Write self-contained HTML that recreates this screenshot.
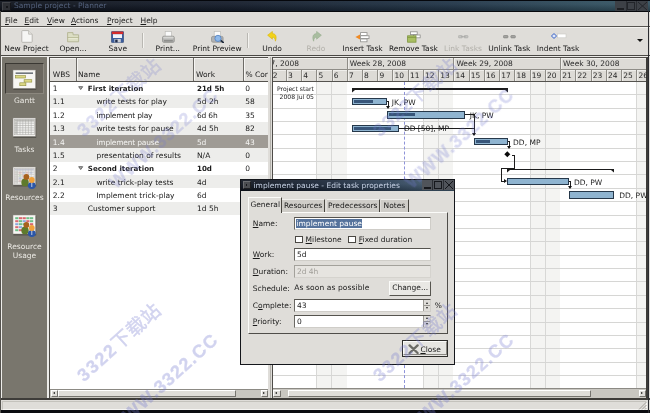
<!DOCTYPE html><html><head><meta charset='utf-8'><title>Sample project - Planner</title><style>
*{box-sizing:border-box;margin:0;padding:0}
html,body{width:650px;height:413px;overflow:hidden;background:#dfddd9}
body{position:relative;font-family:"DejaVu Sans","Liberation Sans",sans-serif;font-size:7.5px;color:#1a1a1a;line-height:10px}
.a{position:absolute;white-space:nowrap}
u{text-decoration:underline;text-underline-offset:1px;text-decoration-thickness:0.6px}
.t{position:absolute;white-space:nowrap;height:10px;line-height:10px}
.tb{position:absolute;white-space:nowrap;top:43.9px;height:10px;line-height:10px;text-align:center;transform:translateX(-50%)}
.dis{color:#b2b0aa}
.side{position:absolute;color:#ebe9e4;text-align:center;left:2px;width:45px;height:10px;line-height:10px}
.row{position:absolute;left:50px;width:218px;height:13.37px}
.hl{position:absolute;left:273px;width:373px;height:1px;background:#d6d6d4}
.wk{position:absolute;top:81px;height:307px;background:#f4f4f2;border-left:1px solid #d8d8d6}
.wk i{position:absolute;left:14.24px;top:0;width:1px;height:100%;background:#d8d8d6}
.bar{position:absolute;height:7.4px;background:#8fb4d0;border:1px solid #26384a}
.bar i{position:absolute;left:1px;top:1.3px;height:3px;background:#38567a}
.ln{position:absolute;background:#1c1c1c}
.gl{position:absolute;white-space:nowrap;height:10px;line-height:10px;font-size:7.5px;color:#222}
.wm b{font-weight:normal;font-size:19px;letter-spacing:0.6px;-webkit-text-stroke:0.5px #7479cf}
.hd{position:absolute;background:#dddbd6}
.fld{position:absolute;background:#fff;border:1px solid #cfcdc8;border-top-color:#55534e;border-left-color:#6a6863}
.wm{position:absolute;white-space:nowrap;color:#7479cf;-webkit-text-stroke:0.35px #7479cf;opacity:0.32;font-family:"Liberation Sans","Noto Sans CJK SC",sans-serif;font-weight:bold;font-size:18px;height:22px;line-height:22px;transform-origin:0 50%;transform:rotate(-42deg);letter-spacing:1.7px}
</style></head><body><div id='w' style='position:absolute;left:0;top:0;width:650px;height:413px;will-change:transform'>
<div class='a' style='left:0;top:0;width:650px;height:12px;background:linear-gradient(180deg,rgba(255,255,255,0.07) 0,rgba(255,255,255,0.05) 35%,rgba(0,0,0,0.28) 100%),linear-gradient(90deg,#0d111a 0%,#131b29 35%,#203447 70%,#31505f 94%,#31505f 100%)'></div><div class='a' style='left:0;top:11px;width:650px;height:1px;background:#07090d'></div>
<div class='a' style='left:0;top:0;width:650px;height:1px;background:#05070c'></div>
<div class='a' style='left:2px;top:2px;width:9px;height:9px;background:#2e3035;border:1px solid #43454a;border-right-color:#15161a;border-bottom-color:#15161a'></div>
<div class='a' style='left:5.5px;top:6px;width:2px;height:2px;background:#15161a'></div>
<div class='t' style='left:14px;top:1px;color:#53617c;font-size:7.5px'>Sample project - Planner</div>
<div class='a' style='left:615px;top:1px;width:33px;height:10px;background:#3d4147'></div>
<div class='a' style='left:617px;top:8px;width:7px;height:1.5px;background:#1d1f23'></div>
<div class='a' style='left:627px;top:2px;width:8px;height:8px;border:1px solid #22252a;border-top-width:1.5px'></div>
<svg class='a' style='left:637px;top:1px' width='11' height='10'><path d='M1 1L10 9M10 1L1 9' stroke='#22252a' stroke-width='1' fill='none'/></svg>
<div class='a' style='left:625.5px;top:1px;width:1px;height:10px;background:#2a2d32'></div>
<div class='a' style='left:636px;top:1px;width:1px;height:10px;background:#2a2d32'></div>
<div class='a' style='left:0;top:12px;width:650px;height:15px;background:#dfddd9'></div>
<div class='t' style='left:5px;top:15.8px'><u>F</u>ile</div>
<div class='t' style='left:24.5px;top:15.8px'><u>E</u>dit</div>
<div class='t' style='left:47px;top:15.8px'><u>V</u>iew</div>
<div class='t' style='left:71px;top:15.8px'><u>A</u>ctions</div>
<div class='t' style='left:107px;top:15.8px'><u>P</u>roject</div>
<div class='t' style='left:140.5px;top:15.8px'><u>H</u>elp</div>
<div class='a' style='left:0;top:26px;width:650px;height:1px;background:#565450'></div>
<div class='a' style='left:0;top:27px;width:650px;height:1px;background:#f3f2ef'></div>
<div class='a' style='left:0;top:55px;width:650px;height:1px;background:#4a4844'></div>
<div class='a' style='left:0;top:56px;width:650px;height:1px;background:#ecebe8'></div>
<div class='tb' style='left:26.5px'>New Project</div>
<div class='tb' style='left:73px'>Open...</div>
<div class='tb' style='left:117.8px'>Save</div>
<div class='tb' style='left:167.8px'>Print...</div>
<div class='tb' style='left:217.2px'>Print Preview</div>
<div class='tb' style='left:272px'>Undo</div>
<div class='tb dis' style='left:316px'>Redo</div>
<div class='tb' style='left:362.6px'>Insert Task</div>
<div class='tb' style='left:413.4px'>Remove Task</div>
<div class='tb dis' style='left:463px'>Link Tasks</div>
<div class='tb' style='left:509.4px'>Unlink Task</div>
<div class='tb' style='left:558px'>Indent Task</div>
<div class='a' style='left:142px;top:33px;width:1px;height:15px;background:#b9b7b2'></div><div class='a' style='left:143px;top:33px;width:1px;height:15px;background:#f4f3f0'></div>
<div class='a' style='left:246.5px;top:33px;width:1px;height:15px;background:#b9b7b2'></div><div class='a' style='left:247.5px;top:33px;width:1px;height:15px;background:#f4f3f0'></div>
<div class='a' style='left:636.8px;top:38.8px;width:0;height:0;border-left:3px solid transparent;border-right:3px solid transparent;border-top:3.6px solid #111'></div>
<svg class='a' style='left:20.5px;top:30px' width='12' height='13' viewBox='0 0 12 13'><path d='M0.8 1.2Q0.8 0.6 1.4 0.6H7.6L11.2 4.2V11.6Q11.2 12.3 10.6 12.3H1.4Q0.8 12.3 0.8 11.6Z' fill='#f6f6f4' stroke='#b3b1ab' stroke-width='0.9'/><path d='M7.6 0.6V4.2H11.2' fill='#e4e3df' stroke='#b3b1ab' stroke-width='0.7'/></svg>
<svg class='a' style='left:67px;top:32px' width='13' height='11' viewBox='0 0 13 11'><path d='M0.6 0.6H6V2.8H11.6V9.8H0.6Z' fill='#dcdec4' stroke='#b2b492' stroke-width='0.9'/><path d='M0.6 5.6H11.6' stroke='#adb088' stroke-width='0.8'/><path d='M1.4 6.4H10.8' stroke='#eef0dc' stroke-width='0.8'/></svg>
<svg class='a' style='left:111.4px;top:30.8px' width='13' height='12' viewBox='0 0 13 12'><rect x='0.4' y='0.4' width='12.2' height='11.2' rx='0.8' fill='#3b5d9d' stroke='#2a426f' stroke-width='0.6'/><rect x='0.8' y='0.6' width='11.4' height='2.6' fill='#d52b2b'/><rect x='2' y='3.2' width='9' height='3.8' fill='#f2f2f8'/><rect x='3.4' y='8' width='6.4' height='3.4' fill='#c9cdd6'/><rect x='4.2' y='8.6' width='2.4' height='2.8' fill='#1f2c4a'/></svg>
<svg class='a' style='left:161.8px;top:30.6px' width='13' height='12' viewBox='0 0 13 12'><rect x='3.2' y='0.5' width='6.4' height='5.6' fill='#fafafa' stroke='#bdbcb8' stroke-width='0.7'/><rect x='0.5' y='5.2' width='11.8' height='6.2' rx='1.4' fill='#b4b4b2' stroke='#8c8c8a' stroke-width='0.7'/><rect x='1.2' y='5.8' width='10.4' height='1.8' rx='0.8' fill='#d6d6d4'/><rect x='2' y='9' width='8.8' height='1.6' fill='#8e8e8c'/></svg>
<svg class='a' style='left:210.8px;top:30.6px' width='13.4' height='12.4' viewBox='0 0 13.4 12.4'><rect x='3.2' y='0.5' width='6.4' height='5.6' fill='#fafafa' stroke='#bdbcb8' stroke-width='0.7'/><rect x='0.5' y='5.4' width='11.6' height='5.8' rx='1.4' fill='#b0b2b4' stroke='#8c8c8a' stroke-width='0.7'/><path d='M9.6 9.4L12.6 11.8' stroke='#1e2a3c' stroke-width='1.7' stroke-linecap='round'/><circle cx='7' cy='7.4' r='3.1' fill='#8fb9ea' stroke='#4f7fc0' stroke-width='0.8'/></svg>
<svg class='a' style='left:267.4px;top:31.4px' width='11' height='11' viewBox='0 0 11 11'><path d='M0.6 4.2L5.4 0.4V2.6C8.6 2.8 10.2 5.4 8.4 10.2C8.2 7.4 7.2 6.2 5.4 6.2V8.2Z' fill='#f2d21a' stroke='#d6b40c' stroke-width='0.6'/></svg>
<svg class='a' style='left:311.4px;top:31.4px' width='11' height='11' viewBox='0 0 11 11'><path d='M10.4 4.2L5.6 0.4V2.6C2.4 2.8 0.8 5.4 2.6 10.2C2.8 7.4 3.8 6.2 5.6 6.2V8.2Z' fill='#a9bda0' stroke='#97ac8e' stroke-width='0.6'/></svg>
<svg class='a' style='left:355px;top:31.6px' width='15' height='11' viewBox='0 0 15 11'><path d='M0.4 5L5 2.4V7.6Z' fill='#f08a24'/><rect x='5.6' y='0.6' width='6.4' height='2.8' fill='#fff' stroke='#8f8f8c' stroke-width='0.8'/><rect x='5.6' y='3.8' width='8.4' height='2.8' fill='#fff' stroke='#8f8f8c' stroke-width='0.8'/><rect x='5.6' y='7' width='6.4' height='2.8' fill='#fff' stroke='#8f8f8c' stroke-width='0.8'/></svg>
<svg class='a' style='left:407px;top:31.2px' width='14' height='12' viewBox='0 0 14 12'><rect x='3.4' y='0.8' width='6.8' height='2.8' fill='#fff' stroke='#8f8f8c' stroke-width='0.8'/><rect x='6.4' y='4' width='6.8' height='2.8' fill='#fff' stroke='#8f8f8c' stroke-width='0.8'/><rect x='0.6' y='4.8' width='8.4' height='6.4' fill='#a9bf62' stroke='#7d9440' stroke-width='0.8'/><path d='M0.6 6.4H9' stroke='#7d9440' stroke-width='0.8'/></svg>
<svg class='a' style='left:458px;top:34.8px' width='11' height='4' viewBox='0 0 11 4'><rect x='0.4' y='0.5' width='4' height='2.4' rx='0.8' fill='#c4c4c1' stroke='#a9a9a6' stroke-width='0.6'/><rect x='6' y='0.5' width='4' height='2.4' rx='0.8' fill='#c4c4c1' stroke='#a9a9a6' stroke-width='0.6'/><path d='M3 1.7H7.6' stroke='#a0a09d' stroke-width='0.7'/></svg>
<svg class='a' style='left:502.6px;top:35.2px' width='13.4' height='4' viewBox='0 0 13.4 4'><rect x='0.4' y='0.5' width='4.6' height='2.4' rx='0.8' fill='#a3a3a0' stroke='#7a7a77' stroke-width='0.6'/><rect x='7.8' y='0.5' width='4.6' height='2.4' rx='0.8' fill='#a3a3a0' stroke='#7a7a77' stroke-width='0.6'/></svg>
<svg class='a' style='left:551.4px;top:33.4px' width='16' height='6' viewBox='0 0 16 6'><path d='M3 0.6L5.6 3L3 5.4L0.4 3Z' fill='#dfe8fb' stroke='#3b62c2' stroke-width='1'/><rect x='6.4' y='1' width='8.6' height='3.8' fill='#fff' stroke='#c9c8c4' stroke-width='0.6'/></svg>
<div class='a' style='left:2px;top:57px;width:45.3px;height:341.4px;background:#79766d'></div>
<div class='a' style='left:1px;top:57px;width:1px;height:341px;background:#efeeeb'></div>
<div class='a' style='left:47.3px;top:57px;width:1.7px;height:341px;background:#ecebe8'></div>
<div class='a' style='left:5px;top:63px;width:38.6px;height:31px;background:#6b675f;border-top:1.3px solid #3a3833;border-left:1.3px solid #3a3833;border-right:1px solid #8b877e;border-bottom:1px solid #8b877e'></div>
<div class='side' style='top:95.5px'>Gantt</div>
<div class='side' style='top:144.5px'>Tasks</div>
<div class='side' style='top:192.5px'>Resources</div>
<div class='side' style='top:241.5px'>Resource</div>
<div class='side' style='top:250.5px'>Usage</div>
<svg class='a' style='left:11.8px;top:68.6px' width='25' height='24' viewBox='0 0 25 24'><rect x='1.4' y='1.8' width='22.8' height='19' fill='#403e3a' opacity='0.75'/><rect x='1' y='1' width='22.6' height='18.4' fill='#f7f6f3' stroke='#8c8982' stroke-width='0.5'/><rect x='3.6' y='3.5' width='17.4' height='1.3' fill='#4f5660'/><rect x='3.6' y='6.6' width='10' height='2.4' fill='#dcd884' stroke='#8f8f3c' stroke-width='0.6'/><rect x='12.1' y='10.7' width='7.7' height='2.4' fill='#dcd884' stroke='#8f8f3c' stroke-width='0.6'/><rect x='7.8' y='13.8' width='6.1' height='2.9' fill='#dcd884' stroke='#8f8f3c' stroke-width='0.6'/></svg>
<svg class='a' style='left:11.8px;top:116.6px' width='25' height='24' viewBox='0 0 25 24'><rect x='1.4' y='1.8' width='22.8' height='19' fill='#403e3a' opacity='0.75'/><rect x='1' y='1' width='22.6' height='18.4' fill='#f7f6f3' stroke='#8c8982' stroke-width='0.5'/><rect x='2.2' y='2.2' width='20.2' height='15.6' fill='#f2f2f0' stroke='#9c9a94' stroke-width='0.5'/><rect x='2.4' y='2.4' width='19.8' height='2.2' fill='#bdbdb9'/><rect x='2.4' y='4.6' width='2.8' height='13' fill='#cfcfcb'/><path d='M2.4 6.2H22.2' stroke='#a9a9a5' stroke-width='0.55'/><path d='M2.4 8.5H22.2' stroke='#a9a9a5' stroke-width='0.55'/><path d='M2.4 10.8H22.2' stroke='#a9a9a5' stroke-width='0.55'/><path d='M2.4 13.1H22.2' stroke='#a9a9a5' stroke-width='0.55'/><path d='M2.4 15.4H22.2' stroke='#a9a9a5' stroke-width='0.55'/><path d='M5.2 2.6V17.6' stroke='#a9a9a5' stroke-width='0.55'/><path d='M8 2.6V17.6' stroke='#a9a9a5' stroke-width='0.55'/><path d='M10.8 2.6V17.6' stroke='#a9a9a5' stroke-width='0.55'/><path d='M13.6 2.6V17.6' stroke='#a9a9a5' stroke-width='0.55'/><path d='M16.4 2.6V17.6' stroke='#a9a9a5' stroke-width='0.55'/><path d='M19.2 2.6V17.6' stroke='#a9a9a5' stroke-width='0.55'/></svg>
<svg class='a' style='left:11.8px;top:166px' width='25' height='23.6' viewBox='0 0 25 23.6'><rect x='1.4' y='1.8' width='22.8' height='18.6' fill='#403e3a' opacity='0.75'/><rect x='1' y='1' width='22.6' height='18.0' fill='#f7f6f3' stroke='#8c8982' stroke-width='0.5'/><rect x='2.4' y='2.4' width='19.8' height='15.8' fill='#f0efec' stroke='#bcbab5' stroke-width='0.6'/><rect x='2.8' y='2.8' width='19' height='1.8' fill='#c4c6d2'/><rect x='2.8' y='4.6' width='3.4' height='13.2' fill='#d9d8d4'/><rect x='6.8' y='5.8' width='2.8' height='1.8' fill='#e7bcbc'/><rect x='10.4' y='5.8' width='2.8' height='1.8' fill='#bcc9e7'/><rect x='14' y='5.8' width='2.8' height='1.8' fill='#e7bcbc'/><rect x='17.6' y='5.8' width='2.8' height='1.8' fill='#bcc9e7'/><rect x='6.8' y='8.6' width='2.8' height='1.8' fill='#c9e0c0'/><rect x='10.4' y='8.6' width='2.8' height='1.8' fill='#e7bcbc'/><rect x='6.8' y='11.4' width='2.8' height='1.8' fill='#bcc9e7'/><rect x='6.8' y='14.2' width='2.8' height='1.8' fill='#e7bcbc'/><path d='M2.4 6.2H22.2' stroke='#c4c3bf' stroke-width='0.55'/><path d='M2.4 8.5H22.2' stroke='#c4c3bf' stroke-width='0.55'/><path d='M2.4 10.8H22.2' stroke='#c4c3bf' stroke-width='0.55'/><path d='M2.4 13.1H22.2' stroke='#c4c3bf' stroke-width='0.55'/><path d='M2.4 15.4H22.2' stroke='#c4c3bf' stroke-width='0.55'/><path d='M5.2 2.6V17.6' stroke='#c4c3bf' stroke-width='0.55'/><path d='M8 2.6V17.6' stroke='#c4c3bf' stroke-width='0.55'/><path d='M10.8 2.6V17.6' stroke='#c4c3bf' stroke-width='0.55'/><path d='M13.6 2.6V17.6' stroke='#c4c3bf' stroke-width='0.55'/><path d='M16.4 2.6V17.6' stroke='#c4c3bf' stroke-width='0.55'/><path d='M19.2 2.6V17.6' stroke='#c4c3bf' stroke-width='0.55'/><ellipse cx='13' cy='16.4' rx='3.7' ry='3.9' fill='#5f7a2c'/><circle cx='14.4' cy='10.9' r='2.9' fill='#a8621e'/><ellipse cx='19.8' cy='19.4' rx='3.9' ry='3.5' fill='#2b56a8'/><path d='M19.8 16.6V21' stroke='#e8e8f0' stroke-width='0.8'/><circle cx='19.8' cy='14' r='2.9' fill='#f0a13a'/></svg>
<svg class='a' style='left:11.8px;top:214.4px' width='25' height='24.6' viewBox='0 0 25 24.6'><rect x='1.4' y='1.8' width='22.8' height='19.6' fill='#403e3a' opacity='0.75'/><rect x='1' y='1' width='22.6' height='19.0' fill='#f7f6f3' stroke='#8c8982' stroke-width='0.5'/><rect x='3.2' y='3.2' width='3.2' height='2' fill='#6fbf88'/><rect x='6.9' y='3.2' width='3.2' height='2' fill='#d8686f'/><rect x='10.6' y='3.2' width='3.2' height='2' fill='#d8686f'/><rect x='14.3' y='3.2' width='3.2' height='2' fill='#6fbf88'/><rect x='18' y='3.2' width='3.2' height='2' fill='#6fbf88'/><rect x='3.2' y='6.2' width='3.2' height='2' fill='#d8686f'/><rect x='6.9' y='6.2' width='3.2' height='2' fill='#6fbf88'/><rect x='10.6' y='6.2' width='3.2' height='2' fill='#8ba6dc'/><rect x='14.3' y='6.2' width='3.2' height='2' fill='#d8686f'/><rect x='18' y='6.2' width='3.2' height='2' fill='#6fbf88'/><rect x='3.2' y='9.2' width='3.2' height='2' fill='#8ba6dc'/><rect x='6.9' y='9.2' width='3.2' height='2' fill='#6fbf88'/><rect x='10.6' y='9.2' width='3.2' height='2' fill='#6fbf88'/><rect x='18' y='9.2' width='3.2' height='2' fill='#d8686f'/><rect x='3.2' y='12.2' width='3.2' height='2' fill='#d8686f'/><rect x='6.9' y='12.2' width='3.2' height='2' fill='#8ba6dc'/><rect x='3.2' y='15.2' width='3.2' height='2' fill='#6fbf88'/><rect x='6.9' y='15.2' width='3.2' height='2' fill='#d8686f'/><ellipse cx='13' cy='16.4' rx='3.7' ry='3.9' fill='#5f7a2c'/><circle cx='14.4' cy='10.9' r='2.9' fill='#a8621e'/><ellipse cx='19.8' cy='19.4' rx='3.9' ry='3.5' fill='#2b56a8'/><path d='M19.8 16.6V21' stroke='#e8e8f0' stroke-width='0.8'/><circle cx='19.8' cy='14' r='2.9' fill='#f0a13a'/></svg>
<div class='a' style='left:49px;top:57px;width:219px;height:341.5px;background:#fff;border:1px solid #4e4c48;border-right:none'></div>
<div class='a' style='left:50px;top:58px;width:218px;height:23px;background:#dfddd9'></div>
<div class='a' style='left:50px;top:58px;width:218px;height:1px;background:#f6f5f3'></div>
<div class='a' style='left:50px;top:80.6px;width:218px;height:1px;background:#55534f;z-index:2'></div>
<div class='a' style='left:76px;top:58px;width:1px;height:23px;background:#6d6b66'></div><div class='a' style='left:77px;top:59px;width:1px;height:21px;background:#f6f5f3'></div>
<div class='a' style='left:193px;top:58px;width:1px;height:23px;background:#6d6b66'></div><div class='a' style='left:194px;top:59px;width:1px;height:21px;background:#f6f5f3'></div>
<div class='a' style='left:242.5px;top:58px;width:1px;height:23px;background:#6d6b66'></div><div class='a' style='left:243.5px;top:59px;width:1px;height:21px;background:#f6f5f3'></div>
<div class='t' style='left:52.8px;top:70.2px'>WBS</div>
<div class='t' style='left:78px;top:70.2px'>Name</div>
<div class='t' style='left:196px;top:70.2px'>Work</div>
<div class='t' style='left:245.5px;top:70.2px'>% Cor</div>
<div class='row' style='top:81.4px;background:#fff;color:#1a1a1a'><span class='t' style='left:2.8px;top:2.7px'>1</span><svg class='a' style='left:27.6px;top:4.6px' width='6' height='5'><path d='M0.7 0.7H4.7L2.7 3.5Z' fill='#b5b5b3' stroke='#4a4a4a' stroke-width='0.8'/></svg><span class='t' style='left:37.8px;top:2.7px;font-weight:bold;font-size:7.1px;'>First iteration</span><span class='t' style='left:147px;top:2.7px;font-weight:bold;font-size:7.1px;'>21d 5h</span><span class='t' style='left:195.2px;top:2.7px'>0</span></div>
<div class='row' style='top:94.8px;background:#ededeb;color:#1a1a1a'><span class='t' style='left:2.8px;top:2.7px'>1.1</span><span class='t' style='left:46.4px;top:2.7px;'>write tests for play</span><span class='t' style='left:147px;top:2.7px;'>5d 2h</span><span class='t' style='left:195.2px;top:2.7px'>58</span></div>
<div class='row' style='top:108.1px;background:#fff;color:#1a1a1a'><span class='t' style='left:2.8px;top:2.7px'>1.2</span><span class='t' style='left:46.4px;top:2.7px;letter-spacing:-0.2px;'>implement play</span><span class='t' style='left:147px;top:2.7px;letter-spacing:-0.2px;'>6d 6h</span><span class='t' style='left:195.2px;top:2.7px'>35</span></div>
<div class='row' style='top:121.5px;background:#ededeb;color:#1a1a1a'><span class='t' style='left:2.8px;top:2.7px'>1.3</span><span class='t' style='left:46.4px;top:2.7px;'>write tests for pause</span><span class='t' style='left:147px;top:2.7px;'>4d 5h</span><span class='t' style='left:195.2px;top:2.7px'>82</span></div>
<div class='row' style='top:134.9px;background:#9f9b95;color:#f4f4f2'><span class='t' style='left:2.8px;top:2.7px'>1.4</span><span class='t' style='left:46.4px;top:2.7px;letter-spacing:-0.2px;'>implement pause</span><span class='t' style='left:147px;top:2.7px;letter-spacing:-0.2px;'>5d</span><span class='t' style='left:195.2px;top:2.7px'>43</span></div>
<div class='row' style='top:148.2px;background:#ededeb;color:#1a1a1a'><span class='t' style='left:2.8px;top:2.7px'>1.5</span><span class='t' style='left:46.4px;top:2.7px;'>presentation of results</span><span class='t' style='left:147px;top:2.7px;'>N/A</span><span class='t' style='left:195.2px;top:2.7px'>0</span></div>
<div class='row' style='top:161.6px;background:#fff;color:#1a1a1a'><span class='t' style='left:2.8px;top:2.7px'>2</span><svg class='a' style='left:27.6px;top:4.6px' width='6' height='5'><path d='M0.7 0.7H4.7L2.7 3.5Z' fill='#b5b5b3' stroke='#4a4a4a' stroke-width='0.8'/></svg><span class='t' style='left:37.8px;top:2.7px;font-weight:bold;font-size:7.1px;'>Second iteration</span><span class='t' style='left:147px;top:2.7px;font-weight:bold;font-size:7.1px;'>10d</span><span class='t' style='left:195.2px;top:2.7px'>0</span></div>
<div class='row' style='top:175.0px;background:#ededeb;color:#1a1a1a'><span class='t' style='left:2.8px;top:2.7px'>2.1</span><span class='t' style='left:46.4px;top:2.7px;'>write trick-play tests</span><span class='t' style='left:147px;top:2.7px;'>4d</span><span class='t' style='left:195.2px;top:2.7px'>0</span></div>
<div class='row' style='top:188.4px;background:#fff;color:#1a1a1a'><span class='t' style='left:2.8px;top:2.7px'>2.2</span><span class='t' style='left:46.4px;top:2.7px;'>Implement trick-play</span><span class='t' style='left:147px;top:2.7px;'>6d</span><span class='t' style='left:195.2px;top:2.7px'>0</span></div>
<div class='row' style='top:201.7px;background:#ededeb;color:#1a1a1a'><span class='t' style='left:2.8px;top:2.7px'>3</span><span class='t' style='left:37.8px;top:2.7px;'>Customer support</span><span class='t' style='left:147px;top:2.7px;'>1d 5h</span><span class='t' style='left:195.2px;top:2.7px'>0</span></div>
<div class='a' style='left:50px;top:389px;width:218px;height:8.5px;background:#c9c7c1;border-top:1px solid #8c8a84'></div>
<div class='a' style='left:50.5px;top:390px;width:7px;height:7px;background:#dfddd9;border:1px solid #76746f;border-top-color:#fff;border-left-color:#fff'></div>
<div class='a' style='left:58px;top:390px;width:178px;height:7px;background:#dfddd9;border:1px solid #76746f;border-top-color:#fff;border-left-color:#fff'></div>
<div class='a' style='left:260.5px;top:390px;width:7px;height:7px;background:#dfddd9;border:1px solid #76746f;border-top-color:#fff;border-left-color:#fff'></div>
<div class='a' style='left:53px;top:392px;width:0;height:0;border-top:1.7px solid transparent;border-bottom:1.7px solid transparent;border-right:2.4px solid #111'></div>
<div class='a' style='left:263px;top:392px;width:0;height:0;border-top:1.7px solid transparent;border-bottom:1.7px solid transparent;border-left:2.4px solid #111'></div>
<div class='a' style='left:270px;top:57px;width:1px;height:341px;background:#b4b2ac'></div>
<div class='a' style='left:272px;top:57px;width:376px;height:341.5px;background:#fff;border:1px solid #4e4c48;border-right:2px solid #3c3b38'></div>
<div class='wk' style='left:316.2px;width:30.5px'><i></i></div>
<div class='wk' style='left:422.9px;width:30.5px'><i></i></div>
<div class='wk' style='left:529.6px;width:30.5px'><i></i></div>
<div class='wk' style='left:636.3px;width:9.7px'><i></i></div>
<div class='hl' style='top:94.2px'></div>
<div class='hl' style='top:107.5px'></div>
<div class='hl' style='top:120.9px'></div>
<div class='hl' style='top:134.3px'></div>
<div class='hl' style='top:147.7px'></div>
<div class='hl' style='top:161.0px'></div>
<div class='hl' style='top:174.4px'></div>
<div class='hl' style='top:187.8px'></div>
<div class='hl' style='top:201.1px'></div>
<div class='hl' style='top:214.5px'></div>
<div class='hl' style='top:227.9px'></div>
<div class='hl' style='top:241.2px'></div>
<div class='hl' style='top:254.6px'></div>
<div class='hl' style='top:268.0px'></div>
<div class='hl' style='top:281.4px'></div>
<div class='hl' style='top:294.7px'></div>
<div class='hl' style='top:308.1px'></div>
<div class='hl' style='top:321.5px'></div>
<div class='hl' style='top:334.8px'></div>
<div class='hl' style='top:348.2px'></div>
<div class='hl' style='top:361.6px'></div>
<div class='hl' style='top:374.9px'></div>
<div class='hd' style='left:273px;top:58px;width:373px;height:23px'></div>
<div class='a' style='left:273px;top:58px;width:373px;height:1px;background:#f0efec'></div>
<div class='a' style='left:273px;top:69px;width:373px;height:1px;background:#8f8d87'></div>
<div class='a' style='left:273px;top:70px;width:373px;height:1px;background:#efeeeb'></div>
<div class='a' style='left:273px;top:80.6px;width:373px;height:1px;background:#55534f'></div>
<div class='t' style='left:273.2px;top:59.1px;color:#2a2a2a;width:40px;overflow:hidden'><span style='margin-left:-2.7px'>7, 2008</span></div>
<div class='a' style='left:346.7px;top:58px;width:1px;height:12px;background:#8f8d87'></div><div class='a' style='left:347.7px;top:59px;width:1px;height:10px;background:#efeeeb'></div>
<div class='t' style='left:349.7px;top:59.1px;color:#2a2a2a'>Week 28, 2008</div>
<div class='a' style='left:453.4px;top:58px;width:1px;height:12px;background:#8f8d87'></div><div class='a' style='left:454.4px;top:59px;width:1px;height:10px;background:#efeeeb'></div>
<div class='t' style='left:456.4px;top:59.1px;color:#2a2a2a'>Week 29, 2008</div>
<div class='a' style='left:560.1px;top:58px;width:1px;height:12px;background:#8f8d87'></div><div class='a' style='left:561.1px;top:59px;width:1px;height:10px;background:#efeeeb'></div>
<div class='t' style='left:563.1px;top:59.1px;color:#2a2a2a'>Week 30, 2008</div>
<div class='t' style='left:273.2px;top:71.4px;color:#2a2a2a;width:14.0px;overflow:hidden'><span style='margin-left:-0.5px'>2</span></div>
<div class='a' style='left:285.7px;top:70px;width:1px;height:11px;background:#8f8d87'></div><div class='a' style='left:286.7px;top:71px;width:1px;height:9.5px;background:#efeeeb'></div>
<div class='t' style='left:287.9px;top:71.4px;color:#2a2a2a;width:14.0px;overflow:hidden'>3</div>
<div class='a' style='left:301.0px;top:70px;width:1px;height:11px;background:#8f8d87'></div><div class='a' style='left:302.0px;top:71px;width:1px;height:9.5px;background:#efeeeb'></div>
<div class='t' style='left:303.2px;top:71.4px;color:#2a2a2a;width:14.0px;overflow:hidden'>4</div>
<div class='a' style='left:316.2px;top:70px;width:1px;height:11px;background:#8f8d87'></div><div class='a' style='left:317.2px;top:71px;width:1px;height:9.5px;background:#efeeeb'></div>
<div class='t' style='left:318.4px;top:71.4px;color:#2a2a2a;width:14.0px;overflow:hidden'>5</div>
<div class='a' style='left:331.5px;top:70px;width:1px;height:11px;background:#8f8d87'></div><div class='a' style='left:332.5px;top:71px;width:1px;height:9.5px;background:#efeeeb'></div>
<div class='t' style='left:333.7px;top:71.4px;color:#2a2a2a;width:14.0px;overflow:hidden'>6</div>
<div class='a' style='left:346.7px;top:70px;width:1px;height:11px;background:#8f8d87'></div><div class='a' style='left:347.7px;top:71px;width:1px;height:9.5px;background:#efeeeb'></div>
<div class='t' style='left:348.9px;top:71.4px;color:#2a2a2a;width:14.0px;overflow:hidden'>7</div>
<div class='a' style='left:361.9px;top:70px;width:1px;height:11px;background:#8f8d87'></div><div class='a' style='left:362.9px;top:71px;width:1px;height:9.5px;background:#efeeeb'></div>
<div class='t' style='left:364.1px;top:71.4px;color:#2a2a2a;width:14.0px;overflow:hidden'>8</div>
<div class='a' style='left:377.2px;top:70px;width:1px;height:11px;background:#8f8d87'></div><div class='a' style='left:378.2px;top:71px;width:1px;height:9.5px;background:#efeeeb'></div>
<div class='t' style='left:379.4px;top:71.4px;color:#2a2a2a;width:14.0px;overflow:hidden'>9</div>
<div class='a' style='left:392.4px;top:70px;width:1px;height:11px;background:#8f8d87'></div><div class='a' style='left:393.4px;top:71px;width:1px;height:9.5px;background:#efeeeb'></div>
<div class='t' style='left:394.6px;top:71.4px;color:#2a2a2a;width:14.0px;overflow:hidden'>10</div>
<div class='a' style='left:407.7px;top:70px;width:1px;height:11px;background:#8f8d87'></div><div class='a' style='left:408.7px;top:71px;width:1px;height:9.5px;background:#efeeeb'></div>
<div class='t' style='left:409.9px;top:71.4px;color:#2a2a2a;width:14.0px;overflow:hidden'>11</div>
<div class='a' style='left:422.9px;top:70px;width:1px;height:11px;background:#8f8d87'></div><div class='a' style='left:423.9px;top:71px;width:1px;height:9.5px;background:#efeeeb'></div>
<div class='t' style='left:425.1px;top:71.4px;color:#2a2a2a;width:14.0px;overflow:hidden'>12</div>
<div class='a' style='left:438.1px;top:70px;width:1px;height:11px;background:#8f8d87'></div><div class='a' style='left:439.1px;top:71px;width:1px;height:9.5px;background:#efeeeb'></div>
<div class='t' style='left:440.3px;top:71.4px;color:#2a2a2a;width:14.0px;overflow:hidden'>13</div>
<div class='a' style='left:453.4px;top:70px;width:1px;height:11px;background:#8f8d87'></div><div class='a' style='left:454.4px;top:71px;width:1px;height:9.5px;background:#efeeeb'></div>
<div class='t' style='left:455.6px;top:71.4px;color:#2a2a2a;width:14.0px;overflow:hidden'>14</div>
<div class='a' style='left:468.6px;top:70px;width:1px;height:11px;background:#8f8d87'></div><div class='a' style='left:469.6px;top:71px;width:1px;height:9.5px;background:#efeeeb'></div>
<div class='t' style='left:470.8px;top:71.4px;color:#2a2a2a;width:14.0px;overflow:hidden'>15</div>
<div class='a' style='left:483.9px;top:70px;width:1px;height:11px;background:#8f8d87'></div><div class='a' style='left:484.9px;top:71px;width:1px;height:9.5px;background:#efeeeb'></div>
<div class='t' style='left:486.1px;top:71.4px;color:#2a2a2a;width:14.0px;overflow:hidden'>16</div>
<div class='a' style='left:499.1px;top:70px;width:1px;height:11px;background:#8f8d87'></div><div class='a' style='left:500.1px;top:71px;width:1px;height:9.5px;background:#efeeeb'></div>
<div class='t' style='left:501.3px;top:71.4px;color:#2a2a2a;width:14.0px;overflow:hidden'>17</div>
<div class='a' style='left:514.3px;top:70px;width:1px;height:11px;background:#8f8d87'></div><div class='a' style='left:515.3px;top:71px;width:1px;height:9.5px;background:#efeeeb'></div>
<div class='t' style='left:516.5px;top:71.4px;color:#2a2a2a;width:14.0px;overflow:hidden'>18</div>
<div class='a' style='left:529.6px;top:70px;width:1px;height:11px;background:#8f8d87'></div><div class='a' style='left:530.6px;top:71px;width:1px;height:9.5px;background:#efeeeb'></div>
<div class='t' style='left:531.8px;top:71.4px;color:#2a2a2a;width:14.0px;overflow:hidden'>19</div>
<div class='a' style='left:544.8px;top:70px;width:1px;height:11px;background:#8f8d87'></div><div class='a' style='left:545.8px;top:71px;width:1px;height:9.5px;background:#efeeeb'></div>
<div class='t' style='left:547.0px;top:71.4px;color:#2a2a2a;width:14.0px;overflow:hidden'>20</div>
<div class='a' style='left:560.1px;top:70px;width:1px;height:11px;background:#8f8d87'></div><div class='a' style='left:561.1px;top:71px;width:1px;height:9.5px;background:#efeeeb'></div>
<div class='t' style='left:562.3px;top:71.4px;color:#2a2a2a;width:14.0px;overflow:hidden'>21</div>
<div class='a' style='left:575.3px;top:70px;width:1px;height:11px;background:#8f8d87'></div><div class='a' style='left:576.3px;top:71px;width:1px;height:9.5px;background:#efeeeb'></div>
<div class='t' style='left:577.5px;top:71.4px;color:#2a2a2a;width:14.0px;overflow:hidden'>22</div>
<div class='a' style='left:590.5px;top:70px;width:1px;height:11px;background:#8f8d87'></div><div class='a' style='left:591.5px;top:71px;width:1px;height:9.5px;background:#efeeeb'></div>
<div class='t' style='left:592.7px;top:71.4px;color:#2a2a2a;width:14.0px;overflow:hidden'>23</div>
<div class='a' style='left:605.8px;top:70px;width:1px;height:11px;background:#8f8d87'></div><div class='a' style='left:606.8px;top:71px;width:1px;height:9.5px;background:#efeeeb'></div>
<div class='t' style='left:608.0px;top:71.4px;color:#2a2a2a;width:14.0px;overflow:hidden'>24</div>
<div class='a' style='left:621.0px;top:70px;width:1px;height:11px;background:#8f8d87'></div><div class='a' style='left:622.0px;top:71px;width:1px;height:9.5px;background:#efeeeb'></div>
<div class='t' style='left:623.2px;top:71.4px;color:#2a2a2a;width:14.0px;overflow:hidden'>25</div>
<div class='a' style='left:636.3px;top:70px;width:1px;height:11px;background:#8f8d87'></div><div class='a' style='left:637.3px;top:71px;width:1px;height:9.5px;background:#efeeeb'></div>
<div class='t' style='left:638.5px;top:71.4px;color:#2a2a2a;width:8.0px;overflow:hidden'>26</div>
<div class='a' style='left:273px;top:85px;width:41px;text-align:right;font-size:6.1px;line-height:7.9px;color:#222'>Project start<br>2008 Jul 05</div>
<div class='a' style='left:404px;top:81.6px;width:0;height:306.4px;border-left:1px dashed #8e93d9'></div>
<div class='ln' style='left:352px;top:88.3px;width:155.8px;height:1.7px'></div>
<svg class='a' style='left:352px;top:89.8px' width='4' height='3'><path d='M0 0H3L0 2.6Z' fill='#1c1c1c'/></svg>
<svg class='a' style='left:504.8px;top:89.8px' width='4' height='3'><path d='M0 0H3V2.6Z' fill='#1c1c1c'/></svg>
<div class='bar' style='left:352px;top:97.9px;width:34.5px'><i style='width:19.0px'></i></div>
<div class='gl' style='left:391.8px;top:97.5px'>JK, PW</div>
<div class='bar' style='left:386.5px;top:111.2px;width:78.0px'><i style='width:26.3px'></i></div>
<div class='gl' style='left:469.8px;top:110.8px'>JK, PW</div>
<div class='bar' style='left:352px;top:124.6px;width:46.6px'><i style='width:37.2px'></i></div>
<div class='gl' style='left:403.9px;top:124.2px'>DD [50], MP</div>
<div class='bar' style='left:474.2px;top:138.0px;width:33.6px'><i style='width:13.4px'></i></div>
<div class='gl' style='left:513.1px;top:137.6px'>DD, MP</div>
<svg class='a' style='left:504.3px;top:151.3px' width='7' height='7'><path d='M3.3 0.3L6.3 3.3L3.3 6.3L0.3 3.3Z' fill='#0a0a0a'/></svg>
<div class='ln' style='left:507px;top:168.5px;width:107.0px;height:1.7px'></div>
<svg class='a' style='left:507px;top:170.0px' width='4' height='3'><path d='M0 0H3L0 2.6Z' fill='#1c1c1c'/></svg>
<svg class='a' style='left:611.0px;top:170.0px' width='4' height='3'><path d='M0 0H3V2.6Z' fill='#1c1c1c'/></svg>
<div class='bar' style='left:507px;top:178.1px;width:61.6px'></div>
<div class='gl' style='left:573.9px;top:177.7px'>DD, PW</div>
<div class='bar' style='left:568.6px;top:191.4px;width:45.4px'></div>
<div class='gl' style='left:619.3px;top:191.0px'>DD, PW</div>
<div class='ln' style='left:386.5px;top:101.1px;width:2.3px;height:0.9px'></div>
<div class='ln' style='left:388.0px;top:101.5px;width:0.9px;height:4.5px'></div>
<svg class='a' style='left:386.4px;top:105.6px' width='4' height='3'><path d='M0 0H4L2 3Z' fill='#111'/></svg>
<div class='ln' style='left:464.5px;top:114.4px;width:10.3px;height:0.9px'></div>
<div class='ln' style='left:474.0px;top:114.8px;width:0.9px;height:18.2px'></div>
<svg class='a' style='left:472.4px;top:132.6px' width='4' height='3'><path d='M0 0H4L2 3Z' fill='#111'/></svg>
<div class='ln' style='left:398.6px;top:128.1px;width:75.8px;height:0.9px'></div>
<div class='ln' style='left:507.8px;top:141.2px;width:1.9px;height:0.9px'></div>
<div class='ln' style='left:508.9px;top:141.6px;width:0.9px;height:4.4px'></div>
<svg class='a' style='left:507.3px;top:145.6px' width='4' height='3'><path d='M0 0H4L2 3Z' fill='#111'/></svg>
<div class='ln' style='left:511.5px;top:154.7px;width:3.7px;height:0.9px'></div>
<div class='ln' style='left:514.4px;top:155.1px;width:0.9px;height:13.6px'></div>
<div class='ln' style='left:501.1px;top:168.3px;width:14.1px;height:0.9px'></div>
<div class='ln' style='left:501.1px;top:168.7px;width:0.9px;height:12.6px'></div>
<div class='ln' style='left:501.1px;top:180.9px;width:3.4px;height:0.9px'></div>
<svg class='a' style='left:504.0px;top:179.3px' width='3' height='4'><path d='M0 0V4L3 2Z' fill='#111'/></svg>
<div class='ln' style='left:568.6px;top:181.3px;width:2.0px;height:0.9px'></div>
<div class='ln' style='left:569.8px;top:181.7px;width:0.9px;height:4.9px'></div>
<svg class='a' style='left:568.2px;top:186.0px' width='4' height='3'><path d='M0 0H4L2 3Z' fill='#111'/></svg>
<div class='a' style='left:273px;top:388px;width:373px;height:9.5px;background:#c9c7c1;border-top:1px solid #8c8a84'></div>
<div class='a' style='left:273px;top:389.5px;width:7.5px;height:7.5px;background:#dfddd9;border:1px solid #76746f;border-top-color:#fff;border-left-color:#fff'></div>
<div class='a' style='left:288px;top:389.5px;width:302.5px;height:7.5px;background:#dfddd9;border:1px solid #76746f;border-top-color:#fff;border-left-color:#fff'></div>
<div class='a' style='left:638.5px;top:389.5px;width:7.5px;height:7.5px;background:#dfddd9;border:1px solid #76746f;border-top-color:#fff;border-left-color:#fff'></div>
<div class='a' style='left:275.3px;top:391.6px;width:0;height:0;border-top:1.7px solid transparent;border-bottom:1.7px solid transparent;border-right:2.4px solid #111'></div>
<div class='a' style='left:641.3px;top:391.6px;width:0;height:0;border-top:1.7px solid transparent;border-bottom:1.7px solid transparent;border-left:2.4px solid #111'></div>
<div class='a' style='left:0;top:398.4px;width:650px;height:1.8px;background:#3e3c39'></div>
<div class='a' style='left:0;top:400px;width:650px;height:10.5px;background:#dfddd9'></div>
<div class='a' style='left:2px;top:400.5px;width:645px;height:9.5px;border:1px solid #c4c2bc;border-right-color:#f6f5f3;border-bottom-color:#f6f5f3'></div>
<svg class='a' style='left:638px;top:401px' width='9' height='9'><path d='M8.5 1L1 8.5M8.5 4L4 8.5M8.5 7L7 8.5' stroke='#8f8d87' stroke-width='0.8'/></svg>
<div class='a' style='left:0;top:410.3px;width:650px;height:3px;background:#0b0c10'></div>
<div class='a' style='left:648px;top:11px;width:1.4px;height:402px;background:#2b2c30'></div>
<div class='a' style='left:0;top:11px;width:0.8px;height:402px;background:#55534f'></div>
<div class='a' style='left:239.6px;top:179px;width:215px;height:186.4px;background:#14161b'></div>
<div class='a' style='left:240.6px;top:180px;width:213px;height:183.8px;background:#dfddd9'></div>
<div class='a' style='left:240.6px;top:180px;width:213px;height:10.6px;background:linear-gradient(180deg,rgba(255,255,255,0.07) 0,rgba(255,255,255,0.05) 35%,rgba(0,0,0,0.25) 100%),linear-gradient(90deg,#10151f 0%,#1a2536 35%,#2e4258 70%,#3f566b 86%,#3f566b 100%)'></div>
<div class='a' style='left:242.5px;top:181px;width:8px;height:8px;background:#4a4c50;border:1px solid #6a6c70;border-right-color:#1c1d20;border-bottom-color:#1c1d20'></div>
<div class='a' style='left:245.6px;top:184.2px;width:1.8px;height:1.8px;background:#15161a'></div>
<div class='t' style='left:253.5px;top:180.6px;color:#c6d1e4;font-size:7.5px'>implement pause - Edit task properties</div>
<div class='a' style='left:421.5px;top:180px;width:32px;height:10px;background:#50545a'></div>
<div class='a' style='left:432.3px;top:180px;width:1px;height:10px;background:#2c2f34'></div>
<div class='a' style='left:442.6px;top:180px;width:1px;height:10px;background:#2c2f34'></div>
<div class='a' style='left:423.5px;top:187px;width:7px;height:1.6px;background:#16181c'></div>
<div class='a' style='left:434.2px;top:181.2px;width:7.4px;height:7.6px;border:1px solid #16181c;border-top-width:1.6px'></div>
<svg class='a' style='left:443.6px;top:180px' width='10' height='10'><path d='M1 1L9 9M9 1L1 9' stroke='#16181c' stroke-width='1' fill='none'/></svg>
<div class='a' style='left:247.5px;top:211.6px;width:200.4px;height:122.2px;background:#dfddd9;border:1px solid #fbfbf9;border-right:1.2px solid #4f4d49;border-bottom:1.2px solid #4f4d49'></div>
<div class='a' style='left:281.8px;top:198.8px;width:43.6px;height:12.8px;background:#cfcdc8;border-top:1px solid #f0efec;border-right:1.3px solid #47453f;text-align:center;line-height:12.6px;color:#1a1a1a'>Resources</div>
<div class='a' style='left:326.6px;top:198.8px;width:53.4px;height:12.8px;background:#cfcdc8;border-top:1px solid #f0efec;border-right:1.3px solid #47453f;text-align:center;line-height:12.6px;color:#1a1a1a'>Predecessors</div>
<div class='a' style='left:381.2px;top:198.8px;width:27.4px;height:12.8px;background:#cfcdc8;border-top:1px solid #f0efec;border-right:1.3px solid #47453f;text-align:center;line-height:12.6px;color:#1a1a1a'>Notes</div>
<div class='a' style='left:247.5px;top:197.2px;width:34.4px;height:15.4px;background:#dfddd9;border-top:1px solid #fbfbf9;border-left:1px solid #fbfbf9;border-right:1.3px solid #47453f;text-align:center;line-height:14.6px;padding-left:1px'>General</div>
<div class='t' style='left:252.8px;top:219.1px'><u>N</u>ame:</div>
<div class='t' style='left:252.8px;top:250.3px'><u>W</u>ork:</div>
<div class='t' style='left:252.8px;top:266.7px'><u>D</u>uration:</div>
<div class='t' style='left:252.8px;top:283.7px'>Schedule:</div>
<div class='t' style='left:252.8px;top:300.8px'>C<u>o</u>mplete:</div>
<div class='t' style='left:252.8px;top:316.9px'><u>P</u>riority:</div>
<div class='fld' style='left:294.3px;top:217px;width:137.2px;height:12.8px'><span class='t' style='left:1.2px;top:1.2px;height:9.2px;line-height:9.2px;background:#56739c;color:#fff;padding:0 0.3px 0 0'>implement pause</span></div>
<div class='fld' style='left:294.3px;top:248px;width:137.2px;height:12.8px'><span class='t' style='left:1.6px;top:0.8px'>5d</span></div>
<div class='fld' style='left:294.3px;top:265px;width:137.2px;height:12.6px;background:#e6e4e0;border-color:#d5d3ce;border-top-color:#a3a19b;border-left-color:#a3a19b'><span class='t' style='left:1.6px;top:0.8px;color:#a19f99'>2d 4h</span></div>
<div class='fld' style='left:294.3px;top:299.4px;width:136.4px;height:12.4px'><span class='t' style='left:1.6px;top:0.6px'>43</span></div>
<div class='fld' style='left:294.3px;top:314.8px;width:136.4px;height:12.8px'><span class='t' style='left:1.6px;top:0.8px'>0</span></div>
<div class='a' style='left:423.4px;top:300.4px;width:6.4px;height:10.4px;background:#dfddd9;border-left:1px solid #9b9993'></div>
<div class='a' style='left:424.4px;top:305.2px;width:5.4px;height:0.8px;background:#9b9993'></div>
<div class='a' style='left:425.6px;top:302.0px;width:0;height:0;border-left:1.6px solid transparent;border-right:1.6px solid transparent;border-bottom:2px solid #222'></div>
<div class='a' style='left:425.6px;top:307.2px;width:0;height:0;border-left:1.6px solid transparent;border-right:1.6px solid transparent;border-top:2px solid #222'></div>
<div class='a' style='left:423.4px;top:315.8px;width:6.4px;height:10.8px;background:#dfddd9;border-left:1px solid #9b9993'></div>
<div class='a' style='left:424.4px;top:320.8px;width:5.4px;height:0.8px;background:#9b9993'></div>
<div class='a' style='left:425.6px;top:317.4px;width:0;height:0;border-left:1.6px solid transparent;border-right:1.6px solid transparent;border-bottom:2px solid #222'></div>
<div class='a' style='left:425.6px;top:323.0px;width:0;height:0;border-left:1.6px solid transparent;border-right:1.6px solid transparent;border-top:2px solid #222'></div>
<div class='t' style='left:434.8px;top:301.2px'>%</div>
<div class='t' style='left:294.3px;top:283.4px;letter-spacing:0.1px'>As soon as possible</div>
<div class='a' style='left:295.2px;top:235.6px;width:7.4px;height:7.4px;background:#fff;border:1px solid #4a4843'></div>
<div class='a' style='left:348.2px;top:235.6px;width:7.4px;height:7.4px;background:#fff;border:1px solid #4a4843'></div>
<div class='t' style='left:305.6px;top:235.2px'><u>M</u>ilestone</div>
<div class='t' style='left:358.8px;top:235.2px'><u>F</u>ixed duration</div>
<div class='a' style='left:389.4px;top:281.4px;width:41.6px;height:14.2px;background:#e9e8e4;border:1px solid #fbfbf9;border-right:1.2px solid #57554f;border-bottom:1.2px solid #57554f;text-align:center;line-height:12.4px'>Change...</div>
<div class='a' style='left:402.2px;top:339.8px;width:45.8px;height:16.8px;background:#e6e5e1;border:1.2px solid #2e2d2a'></div>
<div class='a' style='left:403.4px;top:341px;width:43.4px;height:14.4px;border:1px solid #fbfbf9;border-right-color:#8a8882;border-bottom-color:#8a8882'></div>
<svg class='a' style='left:408px;top:343.8px' width='11' height='10.4'><path d='M1.6 1.4L9.6 9M9.6 1.4L1.6 9' stroke='#6c6c66' stroke-width='2.3' stroke-linecap='round' fill='none'/></svg>
<div class='t' style='left:420.4px;top:344.6px'><u>C</u>lose</div>
<div class='wm' style='left:79.5px;top:367px;opacity:0.32'>3322<b>下载站</b></div>
<div class='wm' style='left:112px;top:419px;letter-spacing:1.2px;opacity:0.32'>WWW.3322.CC</div>
<div class='wm' style='left:79.5px;top:122px;opacity:0.24'>3322<b>下载站</b></div>
<div class='wm' style='left:112px;top:174px;letter-spacing:1.2px;opacity:0.24'>WWW.3322.CC</div>
<div class='wm' style='left:375.5px;top:367px;opacity:0.3'>3322<b>下载站</b></div>
<div class='wm' style='left:408px;top:419px;letter-spacing:1.2px;opacity:0.3'>WWW.3322.CC</div>
<div class='wm' style='left:375.5px;top:122px;opacity:0.27'>3322<b>下载站</b></div>
<div class='wm' style='left:408px;top:174px;letter-spacing:1.2px;opacity:0.27'>WWW.3322.CC</div>
</div></body></html>
